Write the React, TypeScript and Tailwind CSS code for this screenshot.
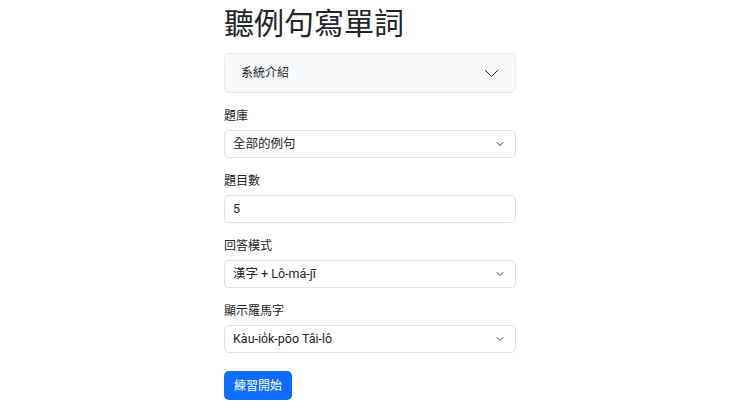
import React, { useState } from "react";

const font = { fontFamily: 'Roboto, "Noto Sans CJK TC", sans-serif' };

const SelectArrow: React.FC = () => (
  <svg width="8" height="5" viewBox="0 0 8 5" className="absolute right-[11px] top-1/2 -translate-y-1/2 pointer-events-none">
    <path d="M1 1l3 3 3-3" fill="none" stroke="#343a40" strokeWidth="1" strokeLinecap="round" strokeLinejoin="round" />
  </svg>
);

const Field: React.FC<{ label: string; children: React.ReactNode }> = ({ label, children }) => (
  <div className="mb-[14px]">
    <label className="block text-[12px] leading-[18px] mb-[5px] text-[#212529]">{label}</label>
    {children}
  </div>
);

const SelectBox: React.FC<{ value: string }> = ({ value }) => (
  <div className="relative h-[28px] rounded-[5px] border border-[#dee2e6] bg-white flex items-center pl-[8px] text-[12.5px] text-[#212529]">
    {value}
    <SelectArrow />
  </div>
);

const App: React.FC = () => {
  const [open, setOpen] = useState(false);

  return (
    <div className="w-full min-h-[406px] bg-white text-[#212529]" style={font}>
      <div className="w-[292px] mx-auto pt-[6px]">
        <h1 className="text-[30px] leading-[36px] font-normal mb-[11px]">聽例句寫單詞</h1>

        {/* 系統介紹 */}
        <div className="mb-[14px] rounded-[5px] border border-[#e9ecef] bg-[#f8f9fa]">
          <button
            onClick={() => setOpen(!open)}
            className="w-full h-[38px] flex items-center justify-between pl-[16px] pr-[16px] text-[12px] text-[#212529]"
          >
            <span>系統介紹</span>
            <svg width="15" height="9" viewBox="0 0 15 9">
              <path d="M1.5 1.5l6 6 6-6" fill="none" stroke="#212529" strokeWidth="1" strokeLinecap="round" strokeLinejoin="round" />
            </svg>
          </button>
        </div>

        <Field label="題庫">
          <SelectBox value="全部的例句" />
        </Field>

        <Field label="題目數">
          <div className="h-[28px] rounded-[5px] border border-[#dee2e6] bg-white flex items-center pl-[8px] text-[12.5px]">5</div>
        </Field>

        <Field label="回答模式">
          <SelectBox value="漢字 + Lô-má-jī" />
        </Field>

        <Field label="顯示羅馬字">
          <SelectBox value="Kàu-ió̍k-pōo Tâi-lô" />
        </Field>

        <button className="mt-[4px] h-[29px] px-[10px] rounded-[5px] bg-[#0d6efd] text-white text-[12px]">練習開始</button>
      </div>
    </div>
  );
};

export default App;
